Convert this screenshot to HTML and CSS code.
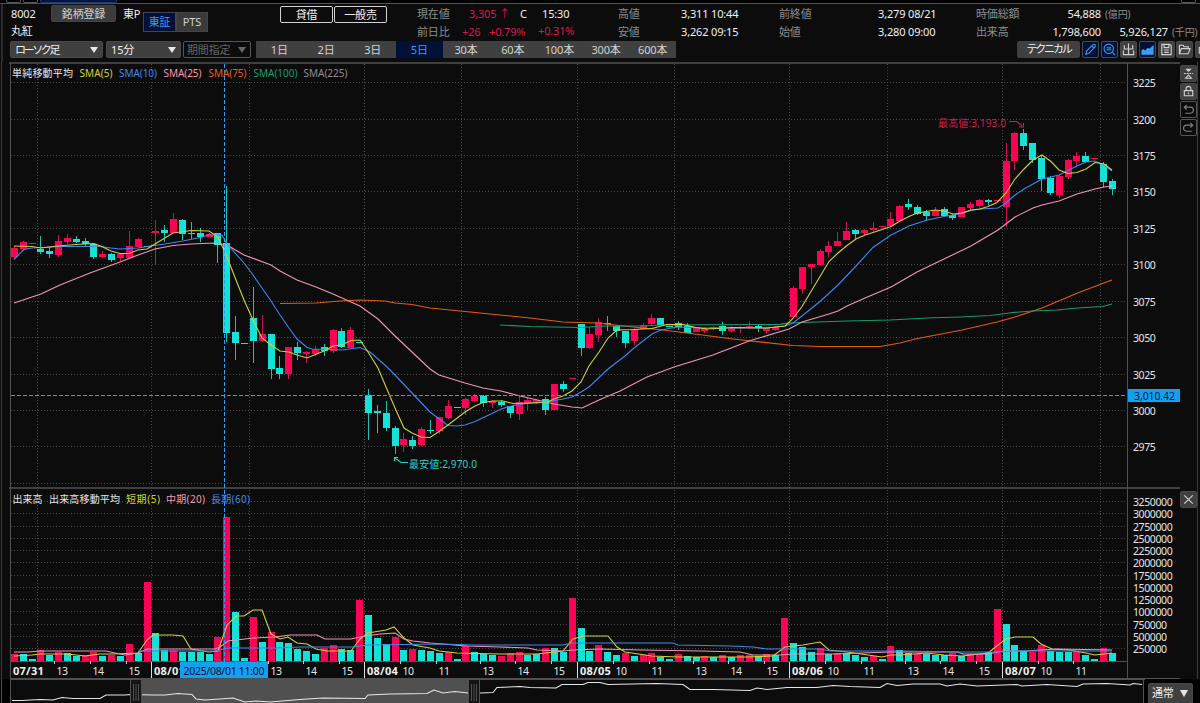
FILE: index.html
```html
<!doctype html>
<html lang="ja">
<head>
    <meta charset="UTF-8">
    <title>8002 丸紅</title>
    <link rel="stylesheet" href="styles.css">
</head>
<body>
    <div id="app">
        <div class="strip">
            <span class="stub"></span><span class="stub"></span><span class="stub on"></span>
            <span class="stub last"></span>
        </div>
        <div class="info">
            <div class="name"><p>8002</p><p>丸紅</p></div>
            <span class="regist">銘柄登録</span>
            <span class="market">東P</span>
            <div class="exchange"><span class="selected">東証</span><span>PTS</span></div>
            <div class="badges"><span>貸借</span><span>一般売</span></div>
            <div class="quote now">
                <p><b>現在値</b><i class="up price">3,305 ↑</i><i class="flag">C</i><i>15:30</i></p>
                <p><b>前日比</b><i class="up diff">+26</i><i class="up rate">+0.79%</i><i class="up pts">+0.31%</i></p>
            </div>
            <div class="quote high">
                <p><b>高値</b><i>3,311</i><i>10:44</i></p>
                <p><b>安値</b><i>3,262</i><i>09:15</i></p>
            </div>
            <div class="quote close">
                <p><b>前終値</b><i>3,279</i><i>08/21</i></p>
                <p><b>始値</b><i>3,280</i><i>09:00</i></p>
            </div>
            <div class="quote total">
                <p><b>時価総額</b><i class="num">54,888</i><em>(億円)</em></p>
                <p><b>出来高</b><i class="num">1,798,600</i><i class="money">5,926,127</i><em>(千円)</em></p>
            </div>
        </div>
        <div class="toolbar">
            <span class="select kind">ローソク足<u></u></span>
            <span class="select foot">15分<u></u></span>
            <span class="select period">期間指定<u></u></span>
            <ul class="range">
                <li>1日</li>
                <li>2日</li>
                <li>3日</li>
                <li class="selected">5日</li>
                <li>30本</li>
                <li>60本</li>
                <li>100本</li>
                <li>300本</li>
                <li>600本</li>
            </ul>
            <span class="technical">テクニカル</span>
            <div class="tools">
                <span class="icon on"><svg viewBox="0 0 16 16"><path d="M3 13l1-3.500 6.500-6.500a1.300 1.300 0 0 1 2.300 2.300L6.500 12zM9.500 4.500l2 2"/></svg></span>
                <span class="icon on"><svg viewBox="0 0 16 16"><circle cx="7.200" cy="7.200" r="5"/><path d="M11 11l3 3M4.800 6.200h5M4.800 8.200h5"/></svg></span>
                <span class="icon"><svg viewBox="0 0 16 16"><path d="M8 1.500v12M3.500 3.500v4h9v-4M2.500 9v4.500h11V9"/></svg></span>
                <span class="icon on"><svg viewBox="0 0 16 16"><path class="solid" d="M1.500 13.500V9l2-1.500 2 1.500L8 6.500l2.500.5 4-4v10.500z"/></svg></span>
                <span class="icon"><svg viewBox="0 0 16 16"><path d="M3 2.500h8.500L13 4v9.500H3zM5.500 3v3h5V3M5.500 8.500h5M5.500 11h5"/></svg></span>
                <span class="icon"><svg viewBox="0 0 16 16"><path d="M2.500 12.500v-9h4l1 1.500h4.500v2M2.500 12.500l2-5.500h9.500l-2 5.500z"/></svg></span>
                <span class="icon"><svg viewBox="0 0 16 16"><path d="M3.500 6h9v6h-9zM5 6V3.500h6"/></svg></span>
            </div>
        </div>
        <div class="main">
            <svg id="chart" width="1180" height="617" viewBox="0 62 1180 617"></svg>
            <div class="side">
                <span class="icon"><svg viewBox="0 0 16 16"><path d="M3 8h10" stroke-dasharray="2 1"/><path class="solid" d="M4.500 3h7L8 6.500z"/><path d="M5 13l3-3.200 3 3.200z"/></svg></span>
                <span class="icon"><svg viewBox="0 0 16 16"><path d="M3.500 7h9v5.500h-9zM5.500 7V4.800a2.500 2.300 0 0 1 5 0V7M8 9v2"/></svg></span>
                <span class="icon off"><svg viewBox="0 0 16 16"><path d="M6 3L3.500 5.500 6 8M3.500 5.500H10a3 3 0 0 1 0 6.500H4.500"/></svg></span>
                <span class="icon off"><svg viewBox="0 0 16 16"><path d="M10 3l2.500 2.500L10 8M12.500 5.500H6A3 3 0 0 0 6 12h5.500"/></svg></span>
                <span class="icon closebtn"><svg viewBox="0 0 16 16"><path d="M3.500 3.500l9 9M12.500 3.500l-9 9"/></svg></span>
            </div>
        </div>
        <div class="nav">
            <svg id="overview" width="1145" height="24" viewBox="0 679 1145 24"></svg>
            <span class="select mode">通常<u></u></span>
        </div>
    </div>
    <script src="chart.js"></script>
</body>
</html>
```
FILE: styles.css
```css
*{
    margin: 0;
    padding: 0;
    box-sizing: border-box;
}
ul,li{
    list-style: none;
}
i,em,u,b{
    font-style: normal;
    font-weight: normal;
    text-decoration: none;
}
body{
    background: #0c0c0c;
    color: #f0f0f0;
    font: 11px/18px "Noto Sans","Noto Sans CJK JP",sans-serif;
    letter-spacing: -0.15px;
    overflow: hidden;
}
#app{
    width: 1200px;
    height: 703px;
    overflow: hidden;
    white-space: nowrap;
}
/* top strip */
.strip{
    display: flex;
    gap: 2px;
    height: 4px;
    padding-left: 6px;
    background: #000;
    border-bottom: 1px solid #505050;
}
.stub{
    width: 15px;
    height: 3px;
    border: 1px solid #555;
    border-top: 0;
    border-radius: 0 0 2px 2px;
}
.stub.on{
    width: 77px;
    background: #001446;
    border-color: #1c3768;
}
.stub.last{
    margin-left: auto;
    margin-right: 4px;
}
/* stock info */
.info{
    display: flex;
    height: 37px;
    margin-left: 1px;
    padding-left: 8px;
    border-left: 2px solid #2a2a2a;
}
.info > *,.toolbar > *,.quote i,.quote b{
    flex: none;
}
.name{
    width: 40px;
    padding-top: 1px;
}
.name p{
    height: 17px;
    line-height: 18px;
}
.regist{
    width: 65px;
    height: 17px;
    margin-top: 1px;
    line-height: 15px;
    text-align: center;
    background: #3c3c3c;
    border: 1px solid #444;
    border-radius: 2px;
    color: #d2d2d2;
}
.market{
    width: 27px;
    padding: 1px 0 0 7px;
}
.exchange{
    display: flex;
    height: 20px;
    margin-top: 8px;
}
.exchange span{
    width: 32px;
    line-height: 18px;
    text-align: center;
    background: #3a3a3a;
    border: 1px solid #444;
    color: #d2d2d2;
}
.exchange .selected{
    width: 33px;
    background: #001038;
    color: #2aa0f0;
}
.badges{
    display: flex;
    gap: 1px;
    margin: 2px 0 0 72px;
}
.badges span{
    width: 53px;
    height: 17px;
    line-height: 15px;
    text-align: center;
    border: 1px solid #d2d2d2;
    border-radius: 2px;
}
.quote{
    padding-top: 1px;
}
.quote p{
    display: flex;
    height: 18px;
}
.quote b,.quote em{
    color: #8c8c8c;
}
.quote .up{
    color: #dc1450;
}
.now{
    margin-left: 30px;
    width: 201px;
}
.now b{
    width: 45px;
}
.now .price{
    width: 51px;
    padding-left: 7px;
}
.now .price + .flag{
    width: 22px;
    margin-left: 7px;
}
.now .diff{
    width: 27px;
}
.now .rate{
    width: 49px;
}
.now .pts{
    margin-top: -1px;
}
.high{
    width: 161px;
}
.high b{
    width: 63px;
}
.high i,.close i{
    width: 30px;
}
.close{
    width: 197px;
}
.close b{
    width: 99px;
}
.total b{
    width: 68px;
}
.total .num{
    width: 57px;
    text-align: right;
}
.total .money{
    width: 67px;
    text-align: right;
}
.total em{
    padding-left: 4px;
    font-size: 10px;
}
/* toolbar */
.toolbar{
    display: flex;
    height: 21px;
    padding-left: 7px;
    border-left: 2px solid #2a2a2a;
    margin-left: 1px;
}
.select{
    display: flex;
    justify-content: space-between;
    align-items: center;
    height: 17px;
    padding: 0 4px;
    background: #404040;
    border: 1px solid #484848;
    border-radius: 2px;
}
.select u{
    border: 4px solid transparent;
    border-top: 6px solid #e6e6e6;
    border-bottom: 0;
}
.kind{
    width: 93px;
    letter-spacing: -2.4px;
}
.foot{
    width: 75px;
    margin-left: 3px;
}
.period{
    width: 68px;
    margin-left: 2px;
    padding-left: 3px;
    background: none;
    color: #666;
    border-color: #555;
}
.period u{
    border-top-color: #666;
}
.range{
    display: flex;
    width: 420px;
    height: 17px;
    margin-left: 5px;
    background: #404040;
}
.range li{
    flex: 1;
    line-height: 17px;
    text-align: center;
    color: #d2d2d2;
}
.range .selected{
    background: #001038;
    color: #2aa0f0;
}
.technical{
    width: 63px;
    height: 17px;
    margin-left: 341px;
    line-height: 16px;
    text-align: center;
    background: #404040;
    border-radius: 2px;
    letter-spacing: -2.2px;
}
.tools{
    display: flex;
    gap: 2px;
    margin-left: 2px;
}
.icon{
    flex: none;
    width: 17px;
    height: 17px;
    background: #404040;
    border: 1px solid #484848;
    border-radius: 2px;
}
.tools .icon:nth-child(n+5){
    margin-left: -0.5px;
}
.icon svg{
    display: block;
    width: 15px;
    height: 15px;
    fill: none;
    stroke: #d2d2d2;
    stroke-width: 1.2;
}
.icon .solid{
    fill: #d2d2d2;
    stroke: none;
}
.icon.on{
    background: #001038;
    border-color: #444c5c;
}
.icon.on svg{
    stroke: #3c96e6;
}
.icon.on .solid{
    fill: #3ca0f0;
}
.icon.off{
    background: none;
    border-color: #555;
}
.icon.off svg{
    stroke: #808080;
}
/* chart */
.main{
    display: flex;
    height: 617px;
}
#chart,#overview{
    display: block;
    flex: none;
}
.side{
    display: flex;
    flex-direction: column;
    gap: 1px;
    width: 18px;
    padding-top: 3px;
    border-right: 1px solid #3c3c3c;
}
.side .closebtn{
    margin-top: 354px;
}
.grid{
    stroke: #464646;
    stroke-dasharray: 1 2;
}
.frame{
    stroke: #505050;
}
.cross{
    fill: #28a0f0;
}
.red{
    fill: #ff0055;
}
.cyan{
    fill: #14e1d7;
}
.wick.red{
    fill: #c81450;
}
.wick.cyan{
    fill: #1ebeb9;
}
.line{
    fill: none;
    stroke-width: 1.1;
}
#chart text{
    fill: #e6e6e6;
    font-size: 10px;
    letter-spacing: 0;
}
#chart .axis{
    font-size: 10.5px;
    letter-spacing: -0.4px;
}
#chart .date{
    font-size: 11px;
    font-weight: bold;
    letter-spacing: 0.2px;
    fill: #f0f0f0;
}
#chart .tag{
    font-size: 10.5px;
    fill: #001432;
}
/* overview */
.nav{
    display: flex;
    height: 24px;
    background: #000;
}
.mode{
    flex: none;
    width: 45px;
    height: 24px;
    margin: 4px 0 0 3px;
    padding: 0 4px 4px 3px;
}
.mode u{
    border-top-width: 7px;
}
```
FILE: chart.js
```js
var NS = 'http://www.w3.org/2000/svg';
var oChart = document.getElementById('chart');
var oView = document.getElementById('overview');
var STEP = 8.855;
var YELLOW = '#d2d232', BLUE = '#3c87f0', PINK = '#f096b4', ORANGE = '#e65a0f', GREEN = '#149b73';

function add(parent, tag, attrs, text){
    var el = document.createElementNS(NS, tag);
    for(var k in attrs){
        el.setAttribute(k, attrs[k]);
    }
    if(text){
        el.textContent = text;
    }
    parent.appendChild(el);
    return el;
}
function seg(parent, x1, y1, x2, y2, cls){
    add(parent, 'path', {d: 'M' + x1 + ' ' + y1 + 'L' + x2 + ' ' + y2, 'class': cls});
}
function rect(parent, x, y, w, h, cls, fill){
    var o = {x: x, y: y, width: w, height: h, 'class': cls, 'shape-rendering': 'crispEdges'};
    if(fill){
        o.fill = fill;
    }
    add(parent, 'rect', o);
}
function line(parent, color, points){
    add(parent, 'polyline', {points: points, 'class': 'line', stroke: color});
}
function label(x, y, text, cls, color, len){
    var el = add(oChart, 'text', {x: x, y: y, 'class': cls || ''}, text);
    if(color){
        el.style.fill = color;
    }
    if(len){
        el.setAttribute('textLength', len);
    }
}
function barLeft(i){
    return Math.floor(11.3 + i * STEP);
}

// color, high, body top, body bottom, low
var candles = ('r246,248,257,259 r241,242,249,250 r243,243,244,244 c236,249,252,254 c247,251,254,258 r235,241,255,257 r234,238,242,244 c236,239,242,243 ' +
    'c238,241,244,247 c243,244,257,259 r251,254,257,258 c253,254,260,262 r253,254,258,261 r231,246,258,258 r238,239,247,247 c246,246,247,247 ' +
    'r220,231,233,265 c225,230,233,242 r213,219,233,233 c219,220,234,240 c222,233,234,239 c228,233,237,242 r233,234,237,237 c233,233,245,263 ' +
    'c186,243,333,342 c316,332,343,360 c343,343,344,344 c287,318,341,363 r315,334,341,342 c334,334,369,379 c356,368,374,379 r347,347,374,379 ' +
    'c342,347,353,360 r351,352,354,363 r346,349,354,356 c344,347,351,356 r329,330,351,353 c328,331,347,348 r327,330,348,348 c342,342,343,343 ' +
    'c389,395,413,440 c405,411,413,433 c401,413,428,431 c426,428,446,454 r433,439,445,452 c436,440,446,449 r427,429,445,446 c420,430,431,434 ' +
    'r417,417,431,434 r400,406,418,419 c407,407,408,408 r398,399,408,415 r394,396,401,402 c395,396,403,407 r400,401,403,408 c400,402,405,407 ' +
    'c406,406,413,418 r396,402,414,420 r398,400,403,410 r399,400,403,404 c397,399,410,415 r384,384,410,410 c381,384,389,392 r378,378,379,379 ' +
    'c324,324,348,356 r327,334,348,349 r318,322,335,342 c316,323,324,331 c325,326,331,337 c331,331,343,348 r328,329,341,345 r323,325,329,329 ' +
    'r314,318,324,325 c318,318,325,325 c326,326,327,327 c321,323,327,330 c323,326,333,333 r328,328,332,332 r327,328,331,333 r326,327,328,330 ' +
    'c322,326,331,335 r326,327,331,332 r326,327,328,333 r321,326,327,329 c324,326,328,332 r327,328,331,334 r326,327,330,331 r323,323,324,324 ' +
    'r286,288,317,317 r267,267,289,294 r264,264,267,284 r249,251,265,265 r241,246,252,257 r232,241,246,246 r222,231,240,240 c229,230,234,239 ' +
    'r229,230,233,235 r222,228,230,232 r226,226,227,227 r212,219,226,226 r205,206,221,221 c199,204,207,210 c205,207,214,215 c210,212,216,220 ' +
    'r207,210,216,216 c207,209,216,216 c214,215,218,220 r207,207,217,217 r202,204,208,210 r199,200,206,208 c199,200,202,205 r200,200,201,201 ' +
    'r143,161,207,227 r132,133,161,170 c129,133,146,150 c143,143,160,163 c155,158,179,191 c176,178,193,195 r175,176,195,198 r159,160,177,179 ' +
    'r152,156,161,166 c152,156,162,163 r158,158,159,159 c162,164,182,187 c179,181,189,195').split(' ');

var volumes = ('r7 c7 c2 r11 c6 r9 c8 c5 r6 r9 c5 r6 c5 r17 c8 r79 c28 c11 r11 c9 c9 c9 c7 r24 r144 c49 c3 r44 c19 r29 c19 c18 ' +
    'c12 c10 c7 r13 r16 c12 c11 r61 c46 c23 c17 r24 c11 r12 c11 c10 c8 r9 c2 r15 c9 c7 c6 r5 r8 r9 c6 c7 r13 c13 c9 r63 ' +
    'c33 c10 r16 c9 c6 r8 c5 r6 r8 c4 c2 r7 c5 c4 r5 c4 r6 c4 r6 r6 c5 r7 c6 r43 c18 c14 c9 r13 c7 r8 c8 c6 ' +
    'c4 r5 c2 r15 c11 c8 r7 c7 c6 c6 r8 c5 r7 r7 c9 r52 c37 c16 c10 r9 r16 c10 c9 c9 r10 c6 c2 r13 c8').split(' ');

// grid
var i, x, y, p, cls;
var days = [37, 151, 249, 364, 461, 577, 674, 789, 887, 1002, 1100];
for(i=0;i<days.length;i++){
    seg(oChart, days[i] + 0.5, 64, days[i] + 0.5, 661, 'grid');
}
for(i=0;i<11;i++){
    y = Math.floor(82.6 + i * 36.43) + 0.5;
    seg(oChart, 11, y, 1127, y, 'grid');
    label(1133, y + 4.5, String(3225 - i * 25), 'axis');
}
seg(oChart, 11, 483.5, 1127, 483.5, 'grid');
for(i=0;i<13;i++){
    y = Math.floor(501.7 + i * 12.25) + 0.5;
    seg(oChart, 11, y, 1127, y, 'grid');
    label(1133, y + 4.5, String(3250000 - i * 250000), 'axis');
}

// frame
add(oChart, 'path', {d: 'M9 63H1180M9 488H1180', 'class': 'frame', 'stroke-width': 1.5});
add(oChart, 'path', {d: 'M10.500 63V679M1127.500 63V678M10 661.500H1127M10 678.500H1180', 'class': 'frame'});
add(oChart, 'path', {d: 'M1.500 62V679', stroke: '#3c3c3c'});

// volume
for(i=0;i<volumes.length;i++){
    p = +volumes[i].slice(1);
    rect(oChart, barLeft(i), 661 - p, 7, p, volumes[i].charAt(0) == 'r' ? 'red' : 'cyan');
}
line(oChart, YELLOW, '14,656 32,655 40,654 67,654 85,656 100,654 113,654 138,653 147,640 153,635 173,635 183,636 191,649 209,652 218,651 227,625 236,616 244,616 253,610 262,610 271,634 280,639 288,637 297,643 307,644 316,649 327,651 351,651 360,639 368,633 386,630 394,627 404,638 413,645 430,648 439,651 457,653 500,654 537,654 563,651 573,639 583,636 608,636 617,647 625,652 652,656 678,657 749,657 773,656 785,647 803,645 820,642 829,650 847,652 882,657 891,655 900,655 927,653 944,655 962,656 988,653 998,645 1006,639 1015,637 1033,637 1041,644 1052,649 1069,650 1086,653 1095,655 1104,654 1112,653');
line(oChart, PINK, '14,652 28,652 40,651 106,651 115,653 125,655 138,653 147,649 215,649 220,647 228,641 245,639 253,638 275,637 290,635 317,635 325,639 351,639 365,636 380,634 395,633 404,639 413,641 430,643 467,646 500,647 528,648 537,650 563,651 573,650 600,649 642,650 700,651 740,652 753,655 780,655 793,654 833,654 890,652 957,652 963,654 988,654 1003,651 1025,651 1057,649 1112,650');
line(oChart, BLUE, '138,651 215,651 228,648 275,648 300,647 353,647 368,645 440,644 473,645 563,645 573,643 673,643 678,645 730,646 753,647 767,649 820,649 830,651 900,651 963,652 997,652 1013,651 1112,651');

// candles
for(i=0;i<candles.length;i++){
    x = barLeft(i);
    cls = candles[i].charAt(0) == 'r' ? 'red' : 'cyan';
    p = candles[i].slice(1).split(',');
    rect(oChart, x + 3, p[0], 1, p[3] - p[0], 'wick ' + cls);
    rect(oChart, x, p[1], 7, p[2] - p[1], cls);
}

// moving averages
line(oChart, ORANGE, '280,303.5 316,303 340,301 360,300 385,301 395,303 412,304.5 430,308 475,312.5 530,318 563,322 597,323 633,327 663,330 687,333 733,339 793,345.5 820,346.5 880,346.5 900,343 915,339 962,330 997,322 1015,317 1042,308 1080,292 1112,280');
line(oChart, GREEN, '500,325 530,326.5 580,327.5 605,326 640,326 665,325 780,324.5 788,323 847,321 890,320 927,318 960,317 990,315.5 1013,312.5 1033,311 1057,310 1077,308 1103,306.5 1112,304');
line(oChart, PINK, '14,303 41,294 60,285 90,273 120,262 138,255 155,249 173,245.5 191,244 215,243 227,245 244,255 271,265 280,271 297,280 316,287 333,294 351,302 360,306 378,319 395,336 412,352 430,369 439,375 465,383 483,388 501,391 520,396 546,402 554,404 572,407 582,408 599,400 620,391 647,377 674,367 713,355 749,341 789,329 802,322 829,314 838,311 847,306 865,298 891,287 917,272 944,259 971,246 998,230 1015,217 1033,208 1042,205 1059,201 1077,194 1095,189 1104,187 1112,186');
line(oChart, BLUE, '14,259.5 24,249.5 32,248 60,246.5 100,246.5 111,248 120,249 138,248 150,246 165,244 183,241 200,237.5 209,235 222,235 227,244 244,263 253,275 262,288 271,301 280,315 289,328 297,339 307,347.5 312,349 342,350 360,347.5 370,352 386,366 395,375 412,393 430,412 448,425.5 457,426 465,425 475,421.5 493,413 501,409 513,405.5 530,403 546,402 563,399 572,397 581,392 589,387 608,369 625,356 634,348 652,334 661,330 677,327 707,328 767,328 785,326 793,323 802,316 820,301.5 838,285 856,266 873,247.5 891,235 909,226 927,220 944,216.5 962,213.5 971,210.5 980,209 998,208 1006,203 1015,195 1024,189 1042,179 1059,175 1077,166 1086,162 1095,161 1104,165 1112,171');
line(oChart, YELLOW, '14,246 32,246.5 41,248 58,246 76,244.5 94,243.5 103,247 111,251 120,253.5 129,253.5 138,250 147,249 155,244 173,233 191,230.5 209,231 218,237 227,257 236,280 244,300 253,320 262,338 271,345 280,351 289,352 297,355 307,358 324,351 333,346 342,345 351,340.5 360,340 368,352 378,368 386,387 395,408 404,428 412,433 421,437 430,437.5 439,431.5 448,425 465,412 475,406 483,402.5 493,401 503,401 513,403.5 530,403 546,402.5 554,399 563,396 572,391 581,382 589,366 599,352 608,338 617,330 634,329.5 652,328.5 667,324.5 683,324.5 696,327.5 707,329 733,327.5 767,328 785,326 793,318.5 802,306.5 811,291.5 820,276.5 829,261.5 838,253 847,245.5 856,239 865,235 873,232.5 891,226.5 900,221 909,216.5 917,213 935,210 944,211 953,214 962,213 971,210 980,209 988,206.5 997,202.5 1006,193 1015,179 1024,169 1033,160 1042,155 1051,161.5 1059,170 1068,173.5 1077,172.5 1086,169 1095,162.5 1104,164 1112,170');

// crosshair
for(y=64;y<661;y+=6){
    rect(oChart, 224, y, 1, 4, 'cross');
}
for(x=11;x<1127;x+=6){
    rect(oChart, x, 395, 4, 1, 'cross');
}

// legends
label(12, 77, '単純移動平均', '', '', 61);
label(79.5, 77, 'SMA(5)', '', YELLOW, 33);
label(119, 77, 'SMA(10)', '', BLUE, 38);
label(163.5, 77, 'SMA(25)', '', PINK, 38);
label(208.5, 77, 'SMA(75)', '', ORANGE, 38);
label(253.5, 77, 'SMA(100)', '', GREEN, 44);
label(303.5, 77, 'SMA(225)', '', '#8c8c96', 44);
label(12.5, 502.5, '出来高', '', '', 30);
label(49, 502.5, '出来高移動平均', '', '', 71);
label(126, 502.5, '短期(5)', '', YELLOW, 34);
label(166, 502.5, '中期(20)', '', PINK, 39);
label(211, 502.5, '長期(60)', '', BLUE, 39);
label(938, 127, '最高値:3,193.0', '', '#dc144f', 68);
label(409, 468, '最安値:2,970.0', '', '#1ed2cd', 68);
add(oChart, 'path', {d: 'M1009 121.500H1017L1022 126M1023.500 123V127H1019', 'class': 'line', stroke: '#dc144f'});
add(oChart, 'path', {d: 'M408 462.500H401L395 458M394.500 461V457.500H398', 'class': 'line', stroke: '#1ed2cd'});

// time axis
var hours = [[62, 13], [98, 14], [134, 15], [276, 13], [311, 14], [347, 15], [408, 10], [444, 11], [488, 13], [523, 14], [559, 15], [621, 10], [657, 11], [701, 13], [736, 14], [772, 15], [833, 10], [869, 11], [913, 13], [948, 14], [984, 15], [1046, 10], [1081, 11]];
for(i=0;i<hours.length;i++){
    rect(oChart, hours[i][0] - 8, 661, 1, 3, '', '#c8c8c8');
    label(hours[i][0] - 5.5, 674.5, String(hours[i][1]), 'axis');
}
var dates = [[10, '07/31'], [151, '08/01'], [364, '08/04'], [577, '08/05'], [789, '08/06'], [1002, '08/07']];
for(i=0;i<dates.length;i++){
    if(i){
        rect(oChart, dates[i][0], 662, 1, 16, '', '#dcdcdc');
    }
    label(dates[i][0] + 3, 674.5, dates[i][1], 'date', '', 31);
}
rect(oChart, 180, 662, 88, 16, '', '#14a0f0');
label(183.5, 674.5, '2025/08/01 11:00', 'tag', '', 81);
rect(oChart, 1128, 389, 52, 13, '', '#14a0f0');
label(1134, 399.5, '3,010.42', 'tag', '', 41);

// overview
rect(oView, 11, 680, 1132, 23, '', '#0c0c0c');
rect(oView, 142, 680, 327, 23, '', '#505050');
line(oView, '#e6e6e6', '12,700.5 22,700.5 40,699.5 53,700 62,697.5 73,698.5 100,698.5 106,695 125,695 131,694.5 153,695 165,695 178,693.5 192,694.5 196,699 205,700 220,699 233,698 245,702 256,701 270,702 300,699.5 323,698 365,698.5 368,695 390,694 427,693.5 434,690 443,693 455,691.5 468,693 480,693 493,692.5 497,687.5 520,686.5 530,687.5 556,688 562,684.5 583,684.5 588,682.5 600,682.5 608,684.5 657,683.5 683,684.5 690,689.5 713,689.5 750,690.5 757,688 767,689.5 787,687.5 817,687.5 833,685.5 850,686.5 880,687.5 887,683.5 897,685.5 913,684 940,684 947,686 960,684 977,686 1017,684.5 1022,686 1047,684.5 1077,686.5 1083,684 1107,683.5 1130,685 1133,683.5 1142,684.5');
[130, 468].forEach(function(h){
    rect(oView, h, 680, 12, 23, '', '#141414');
    add(oView, 'path', {d: 'M' + (h + 0.5) + ' 680V703M' + (h + 3.5) + ' 684V701M' + (h + 6) + ' 684V701M' + (h + 8.5) + ' 684V701M' + (h + 11.5) + ' 680V703', 'class': 'frame'});
});
add(oView, 'path', {d: 'M1.500 679V703M10.500 679V703M1143.500 679V703M10 679.500H1145', 'class': 'frame'});
```
